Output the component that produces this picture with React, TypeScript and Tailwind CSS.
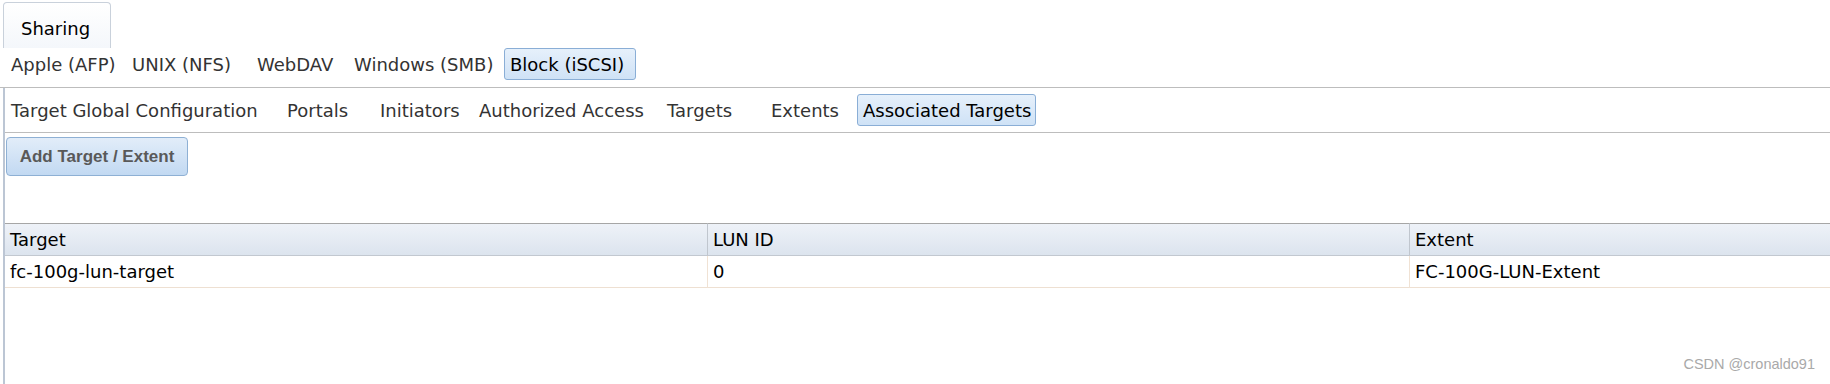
import React from 'react';

type Tab = { label: string; w: string; active?: boolean };

const shareTabs: Tab[] = [
  { label: 'Apple (AFP)', w: 'w-[121px]' },
  { label: 'UNIX (NFS)', w: 'w-[125px]' },
  { label: 'WebDAV', w: 'w-[97px]' },
  { label: 'Windows (SMB)', w: 'w-[156px]' },
  { label: 'Block (iSCSI)', w: 'w-[132px]', active: true },
];

const iscsiTabs: Tab[] = [
  { label: 'Target Global Configuration', w: 'w-[276px]' },
  { label: 'Portals', w: 'w-[93px]' },
  { label: 'Initiators', w: 'w-[99px]' },
  { label: 'Authorized Access', w: 'w-[188px]' },
  { label: 'Targets', w: 'w-[104px]' },
  { label: 'Extents', w: 'w-[92px]' },
  { label: 'Associated Targets', w: 'w-[179px]', active: true },
];

const rows = [{ target: 'fc-100g-lun-target', lun: '0', extent: 'FC-100G-LUN-Extent' }];

function TabItem({ tab }: { tab: Tab }) {
  return (
    <div
      className={`${tab.w} h-[32px] shrink-0 flex items-center pl-[5px] whitespace-nowrap border rounded-[3px] ${
        tab.active
          ? 'border-[#8aaed6] bg-gradient-to-b from-[#e6f0fb] to-[#cfe2f6] text-black'
          : 'border-transparent text-[#333]'
      }`}
    >
      {tab.label}
    </div>
  );
}

export default function App() {
  return (
    <div className="relative h-[384px] w-full overflow-hidden bg-white font-['DejaVu_Sans',sans-serif] text-[18px]">
      {/* top tab */}
      <div className="pl-[3px] pt-[2px]">
        <div className="w-[108px] h-[46px] border border-b-0 border-[#c9d1db] rounded-t-[4px] bg-gradient-to-b from-white to-[#f4f7fb] pl-[17px] pt-[12px] text-black">
          Sharing
        </div>
      </div>

      {/* share types */}
      <div className="flex items-start h-[40px] pl-[5px] border-b border-[#bdbdbd]">
        {shareTabs.map(t => (
          <TabItem key={t.label} tab={t} />
        ))}
      </div>

      {/* panel */}
      <div className="ml-[3px] border-l-2 border-[#bcc6d4] h-[297px]">
        <div className="flex items-center h-[45px] border-b border-[#bdbdbd]">
          {iscsiTabs.map(t => (
            <TabItem key={t.label} tab={t} />
          ))}
        </div>

        <div className="pt-[4px] pl-[1px]">
          <button className="w-[182px] h-[39px] rounded-[4px] border border-[#8eb0d4] bg-gradient-to-b from-[#e2edf9] to-[#c2d9f2] font-['Liberation_Sans',sans-serif] font-bold text-[17px] text-[#595959]">
            Add Target / Extent
          </button>
        </div>

        <div className="mt-[47px] overflow-hidden">
          <div className="grid grid-cols-[702px_702px_702px] w-max">
            {['Target', 'LUN ID', 'Extent'].map((h, i) => (
              <div
                key={h}
                className={`h-[33px] flex items-center pl-[5px] border-t border-t-[#a6a6a6] border-b border-b-[#c2c8d0] bg-gradient-to-b from-[#eef2f8] to-[#dce4ee] text-black ${
                  i > 0 ? 'border-l border-l-[#c0c6ce]' : ''
                }`}
              >
                {h}
              </div>
            ))}
            {rows.map(r =>
              [r.target, r.lun, r.extent].map((c, i) => (
                <div
                  key={r.target + i}
                  className={`h-[32px] flex items-center pl-[5px] border-b border-[#eee0d2] text-black ${
                    i > 0 ? 'border-l border-l-[#f0e2d4]' : ''
                  }`}
                >
                  {c}
                </div>
              ))
            )}
          </div>
        </div>
      </div>

      <div className="absolute right-[15px] bottom-[8px] font-['Liberation_Sans',sans-serif] text-[14.5px] text-[#a9a9a9]">
        CSDN @cronaldo91
      </div>
    </div>
  );
}
